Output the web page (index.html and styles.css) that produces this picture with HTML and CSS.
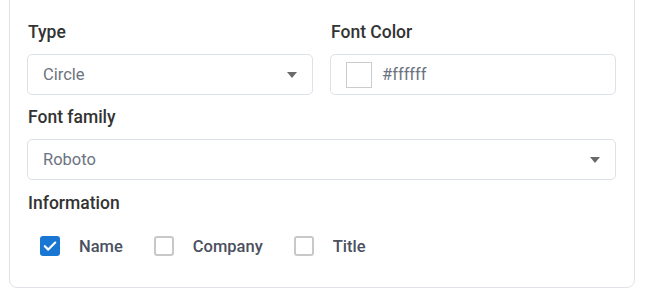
FILE: index.html
```html
<!DOCTYPE html>
<html>
<head>
<meta charset="utf-8">
<link rel="stylesheet" href="styles.css">
</head>
<body>
<div class="card">
  <div class="grid">
    <div class="field">
      <div class="label">Type</div>
      <div class="control select">
        <span class="value">Circle</span>
        <span class="caret"></span>
      </div>
    </div>
    <div class="field">
      <div class="label">Font Color</div>
      <div class="control color">
        <span class="swatch"></span>
        <span class="value">#ffffff</span>
      </div>
    </div>
    <div class="field wide">
      <div class="label">Font family</div>
      <div class="control select">
        <span class="value">Roboto</span>
        <span class="caret"></span>
      </div>
    </div>
    <div class="field wide info">
      <div class="label">Information</div>
      <div class="checks">
        <label class="check">
          <span class="box checked">
            <svg width="20" height="20" viewBox="0 0 20 20"><polyline points="4.8,10.2 8.3,13.6 15.2,6.6" fill="none" stroke="#fff" stroke-width="2.2" stroke-linecap="round" stroke-linejoin="round"/></svg>
          </span>
          <span class="check-text">Name</span>
        </label>
        <label class="check">
          <span class="box"></span>
          <span class="check-text">Company</span>
        </label>
        <label class="check">
          <span class="box"></span>
          <span class="check-text">Title</span>
        </label>
      </div>
    </div>
  </div>
</div>
</body>
</html>
```

FILE: styles.css
```css
html, body {
  margin: 0;
  padding: 0;
  background: #ffffff;
}
body {
  font-family: Roboto, "Liberation Sans", sans-serif;
}
.card {
  margin: -10px 16px 0 9px;
  border: 1px solid #dfe2e8;
  border-radius: 8px;
  padding: 31px 18px 31px 17px;
  background: #fff;
}
.grid {
  display: grid;
  grid-template-columns: 1fr 1fr;
  column-gap: 17px;
  row-gap: 12px;
}
.wide {
  grid-column: 1 / span 2;
}
.info {
  margin-top: 1px;
}
.label {
  font-size: 17.5px;
  font-weight: 500;
  line-height: 20px;
  color: #333333;
  padding-left: 1px;
}
.control {
  margin-top: 12px;
  height: 41px;
  box-sizing: border-box;
  border: 1px solid #dde1e8;
  border-radius: 5px;
  display: flex;
  align-items: center;
}
.select {
  padding: 0 15px 0 15px;
  justify-content: space-between;
}
.value {
  font-size: 16.5px;
  color: #6b7380;
}
.caret {
  width: 0;
  height: 0;
  border-left: 5.5px solid transparent;
  border-right: 5.5px solid transparent;
  border-top: 6px solid #6a6a6a;
}
.color {
  padding: 0 15px;
  gap: 10px;
}
.swatch {
  width: 26px;
  height: 26px;
  box-sizing: border-box;
  border: 1px solid #cccccc;
  background: #ffffff;
}
.checks {
  display: flex;
  align-items: center;
  gap: 31px;
  padding-left: 13px;
  margin-top: 23px;
}
.check {
  display: flex;
  align-items: center;
  gap: 19px;
}
.box {
  width: 20px;
  height: 20px;
  box-sizing: border-box;
  border: 2px solid #c8c8c8;
  border-radius: 3px;
  display: block;
}
.box.checked {
  border: none;
  background: #1976d2;
}
.box svg {
  display: block;
}
.check-text {
  font-size: 16.5px;
  font-weight: 500;
  color: #4a5060;
}
```
